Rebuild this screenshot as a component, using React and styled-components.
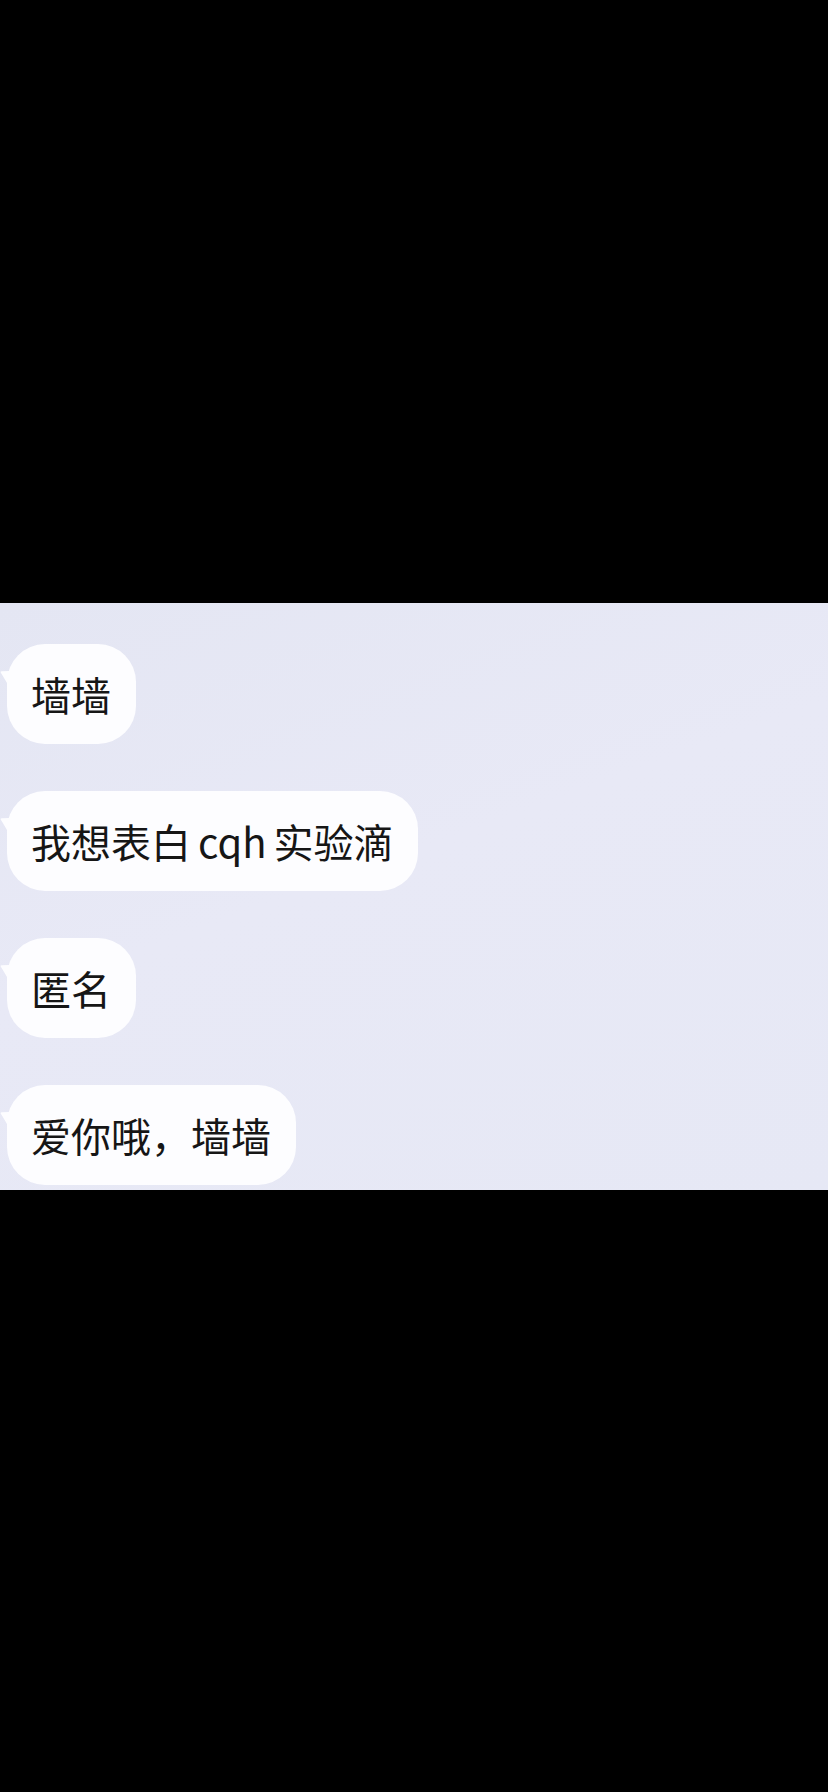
import React from 'react';
import styled, {createGlobalStyle} from "styled-components";

const GlobalStyle = createGlobalStyle`
  html, body {
    margin: 0;
    padding: 0;
    background: #000;
  }
  body {
    font-family: "Noto Sans CJK SC", "Noto Sans", sans-serif;
  }
`;

const Screen = styled.div`
  width: 828px;
  height: 1792px;
  background: #000;
  display: flex;
  flex-direction: column;
  justify-content: center;
`;

const ChatPanel = styled.section`
  height: 587px;
  margin-top: 1px;
  background: linear-gradient(160deg, #e4e6f3 0%, #e8e9f6 45%, #e6e8f5 100%);
  padding: 41px 0 0 7px;
  box-sizing: border-box;
  overflow: hidden;
  display: flex;
  flex-direction: column;
  align-items: flex-start;
  gap: 47px;
`;

const Bubble = styled.div`
  position: relative;
  height: 100px;
  padding: 0 25px 0 24px;
  background: #fdfdff;
  border-radius: 38px;
  display: flex;
  align-items: center;
  font-size: 40px;
  color: #161616;
  white-space: nowrap;
  word-spacing: -2px;
  flex-shrink: 0;
`;

const Tail = styled.svg`
  position: absolute;
  left: -7px;
  top: 27px;
  width: 10px;
  height: 17px;
`;

const messages = [
  "墙墙",
  "我想表白 cqh 实验滴",
  "匿名",
  "爱你哦，墙墙",
];

const ChatBubble = ({children}) => (
    <Bubble>
      <Tail viewBox="0 0 10 17">
        <path d="M10 0 L1.5 0.3 Q0 0.6 0.8 1.8 C3.5 6 6.5 11 10 17 Z" fill="#fdfdff"/>
      </Tail>
      {children}
    </Bubble>
);

const App = () => {
  return (
      <Screen>
        <GlobalStyle/>
        <ChatPanel>
          {messages.map((m, i) => <ChatBubble key={i}>{m}</ChatBubble>)}
        </ChatPanel>
      </Screen>
  );
};

export default App;
